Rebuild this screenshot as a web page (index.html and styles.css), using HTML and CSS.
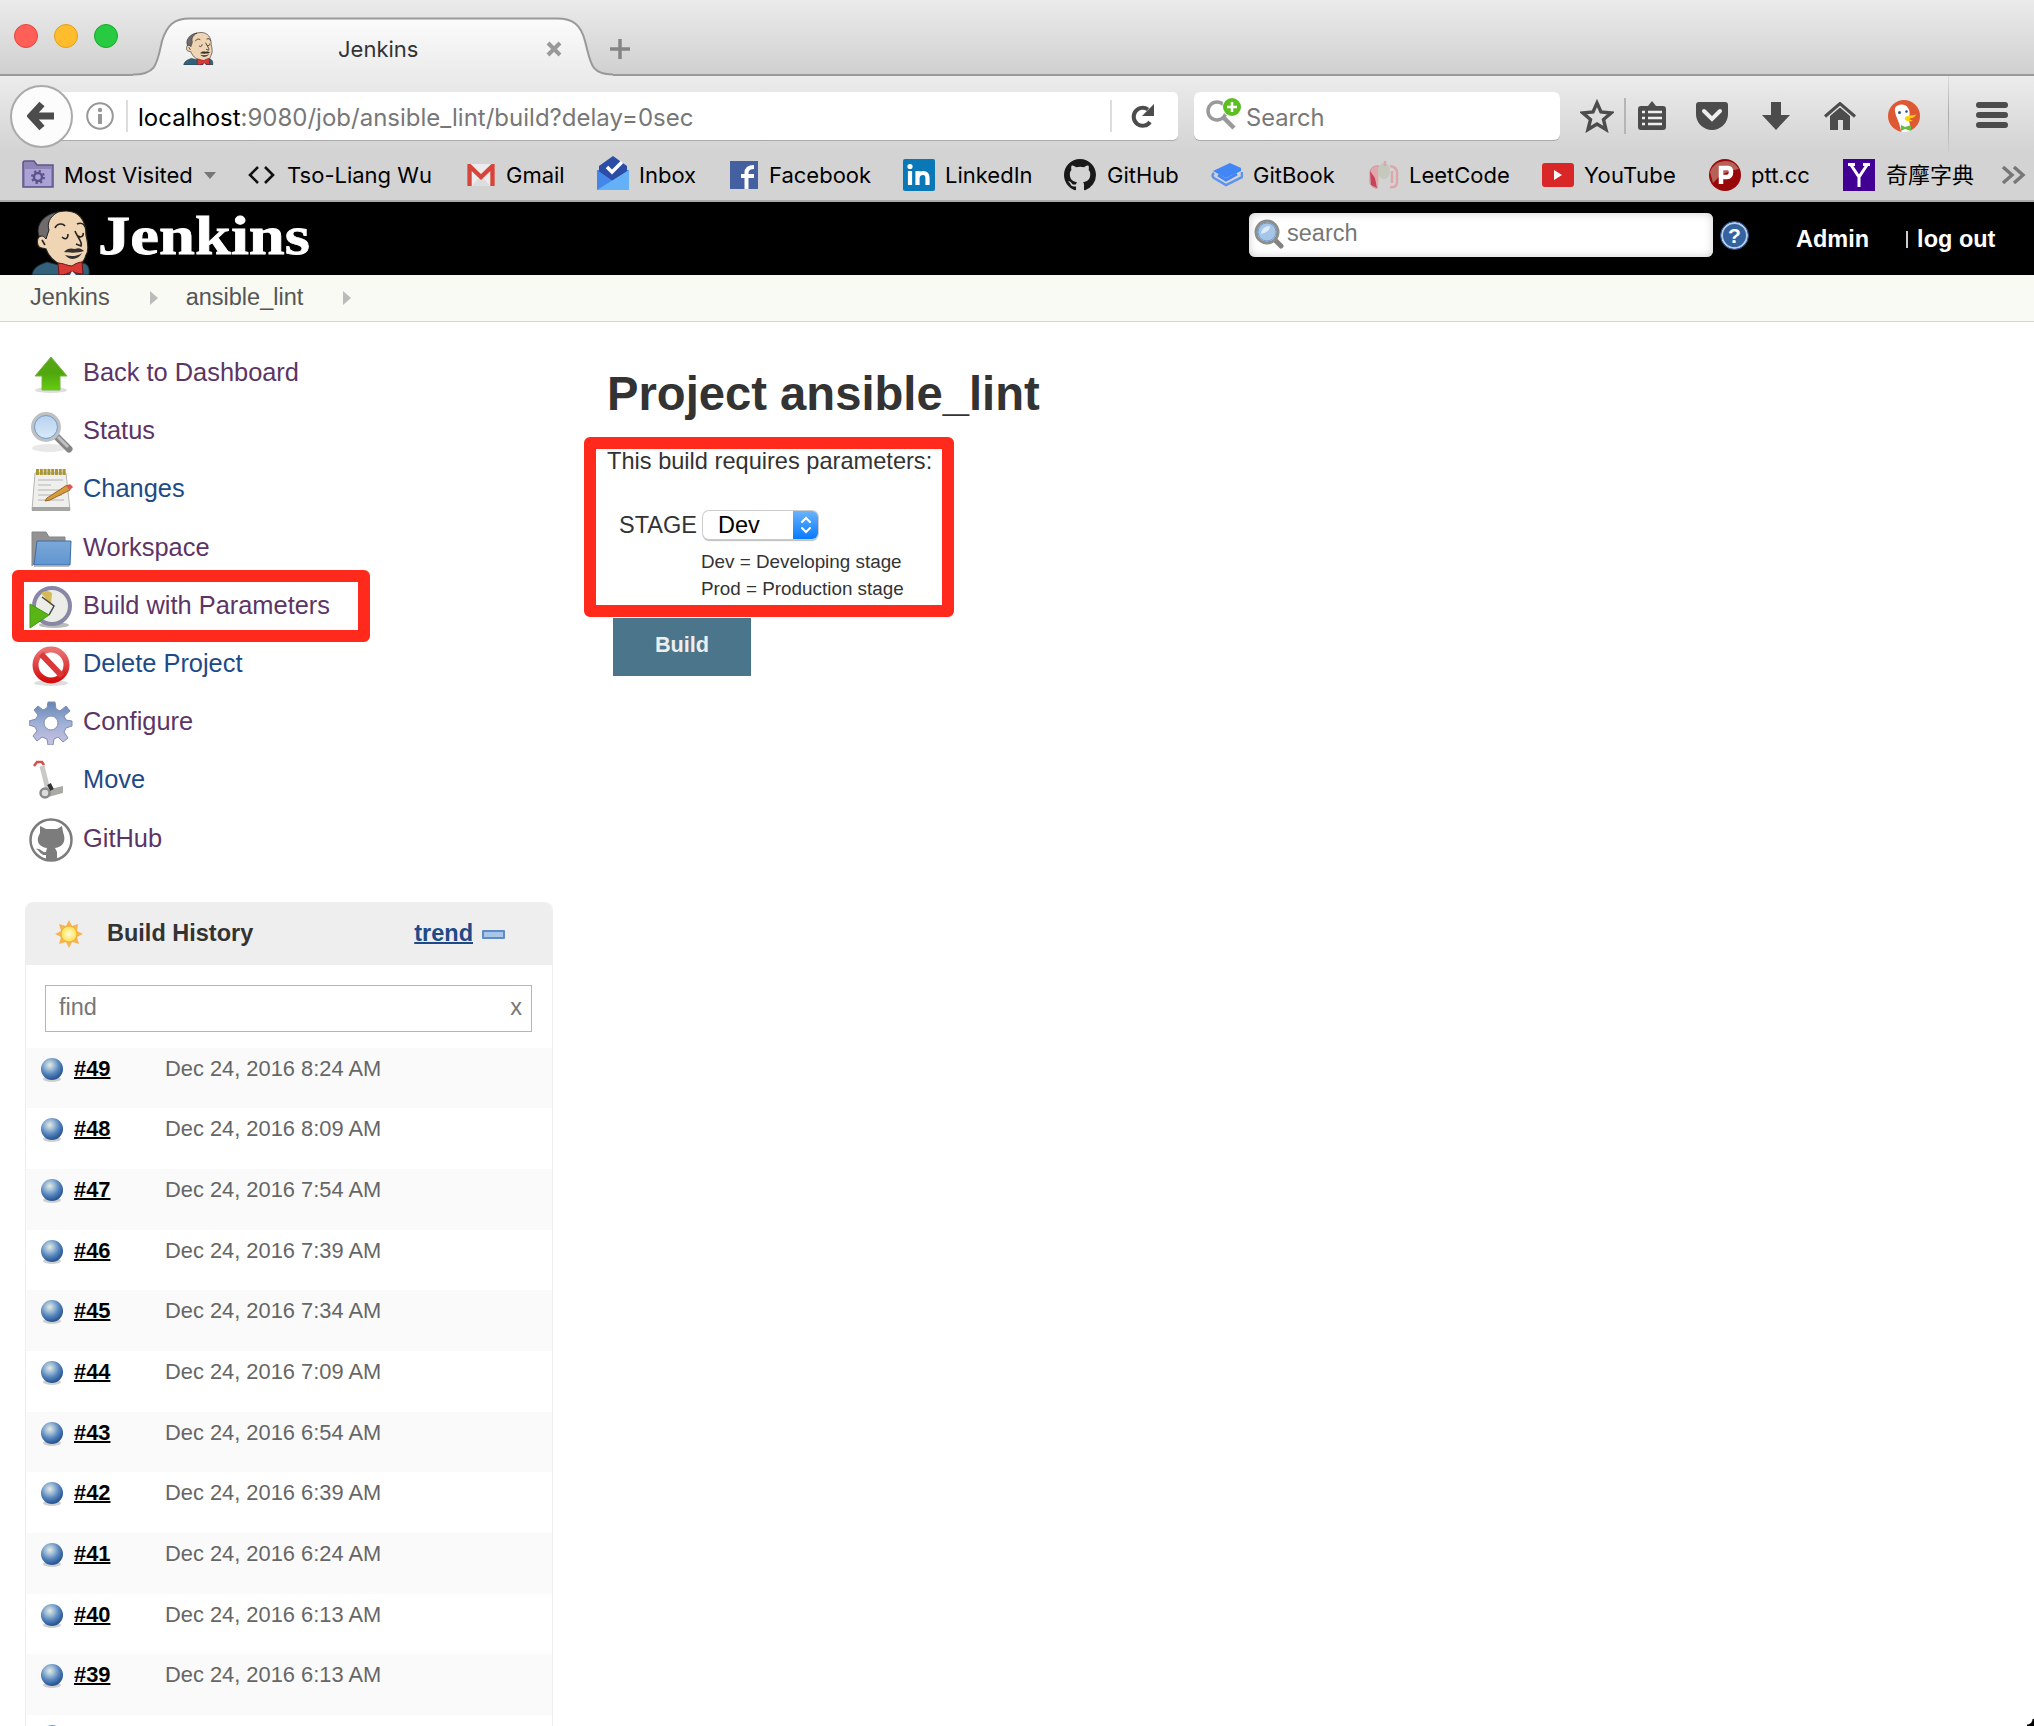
FILE: index.html
```html
<!DOCTYPE html>
<html lang="en">
<head>
<meta charset="utf-8">
<title>Jenkins</title>
<link rel="stylesheet" href="styles.css">
</head>
<body>
<svg class="defs" width="0" height="0">
  <defs>
    <radialGradient id="ballFill" cx="40%" cy="32%" r="65%"><stop offset="0" stop-color="#e6ecdf"/><stop offset=".3" stop-color="#a3c0d8"/><stop offset=".65" stop-color="#5685bd"/><stop offset="1" stop-color="#2a5795"/></radialGradient>
    <linearGradient id="arrowFill" x1="0" y1="0" x2="0" y2="1"><stop offset="0" stop-color="#5aa31c"/><stop offset=".5" stop-color="#4fa80c"/><stop offset="1" stop-color="#66cc11"/></linearGradient>
    <linearGradient id="lensFill" x1="0" y1="0" x2="0" y2="1"><stop offset="0" stop-color="#b4d0ee"/><stop offset="1" stop-color="#dcebfa"/></linearGradient>
    <linearGradient id="folderFill" x1="0" y1="0" x2="0" y2="1"><stop offset="0" stop-color="#7ba9d8"/><stop offset="1" stop-color="#5f95cf"/></linearGradient>
    <linearGradient id="gearFill" x1="0" y1="0" x2="0" y2="1"><stop offset="0" stop-color="#6585b4"/><stop offset=".5" stop-color="#9fb0d6"/><stop offset="1" stop-color="#c8c2e2"/></linearGradient>
    <linearGradient id="banFill" x1="0" y1="0" x2="0" y2="1"><stop offset="0" stop-color="#ea7373"/><stop offset="1" stop-color="#d40f0f"/></linearGradient>
    <linearGradient id="tabFill" x1="0" y1="0" x2="0" y2="1"><stop offset="0" stop-color="#fbfbfb"/><stop offset="1" stop-color="#ebebeb"/></linearGradient>
    <radialGradient id="sunFill"><stop offset="0" stop-color="#fffce0"/><stop offset="1" stop-color="#ffe24a"/></radialGradient>
    <symbol id="butler" viewBox="0 0 58 65">
      <path d="M0 65C1 58 6 55 15 52L27 55 44 54 52 53C56 55 58 58 57 65Z" fill="#33607a" stroke="#1c2c36"/>
      <path d="M10 38C4 38 4 27 9 26C7 12 18 1 34 1C47 1 54 10 54 25C56 33 57 41 54 45C52 53 46 58 38 57C28 56 18 50 14 39Z" fill="#efd5b4" stroke="#2a2521" stroke-width="1.2"/>
      <path d="M7 26C3 15 12 4 26 2C17 7 15 14 17 20L14 29C12 26 9 25 7 27Z" fill="#6f6b6d" stroke="#222"/>
      <path d="M23 18C25 13 31 13 33 16M45 14C49 12 52 14 53 17M30 27C33 30 36 29 36 24M46 26C49 28 52 26 51 23M43 21C45 27 51 32 49 36L44 34M10 30L13 35" fill="none" stroke="#2a2521" stroke-width="1.6"/>
      <path d="M32 42C35 38 39 38 43 39C47 37 50 39 52 41C47 43 38 43 32 42ZM33 45C40 47 46 46 50 43C46 50 38 51 33 45Z" fill="#33302f"/>
      <path d="M26 53C31 53 36 56 40 56C44 53 48 52 50 52L51 64C47 64 43 63 40 61C36 64 32 65 27 65Z" fill="#d83a35" stroke="#6d1414"/>
      <path d="M38 65L40 61L44 65Z" fill="#eee"/>
    </symbol>
    <symbol id="octocat" viewBox="0 0 16 16"><path d="M8 0C3.58 0 0 3.58 0 8c0 3.54 2.29 6.53 5.47 7.59.4.07.55-.17.55-.38 0-.19-.01-.82-.01-1.49-2.01.37-2.53-.49-2.69-.94-.09-.23-.48-.94-.82-1.13-.28-.15-.68-.52-.01-.53.63-.01 1.08.58 1.23.82.72 1.21 1.87.87 2.33.66.07-.52.28-.87.51-1.07-1.78-.2-3.64-.89-3.64-3.95 0-.87.31-1.59.82-2.15-.08-.2-.36-1.02.08-2.12 0 0 .67-.21 2.2.82.64-.18 1.32-.27 2-.27s1.36.09 2 .27c1.53-1.04 2.2-.82 2.2-.82.44 1.1.16 1.92.08 2.12.51.56.82 1.27.82 2.15 0 3.07-1.87 3.75-3.65 3.95.29.25.54.73.54 1.48 0 1.07-.01 1.93-.01 2.2 0 .21.15.46.55.38A8.01 8.01 0 0 0 16 8c0-4.42-3.58-8-8-8z"/></symbol>
    <symbol id="ball" viewBox="0 0 24 26"><ellipse cx="12" cy="22" rx="9" ry="3" fill="#bbb" opacity=".7"/><circle cx="12" cy="12" r="11" fill="url(#ballFill)"/></symbol>
  </defs>
</svg>

<header class="browser">
  <div class="tabstrip">
    <div class="lights"><i class="red"></i><i class="yellow"></i><i class="green"></i></div>
    <div class="tab">
      <svg class="tab-shape" width="480" height="60" viewBox="0 0 480 60"><path d="M0 58C24 58 24 46 29 24C34 8 41 2 57 2H424C440 2 448 8 452 24C458 46 457 58 480 58V60H0Z" fill="url(#tabFill)"/><path d="M0 57.500C24 57.500 24 46 29 24C34 8 41 1.500 57 1.500H424C440 1.500 448 8 452 24C458 46 457 57.500 480 57.500" fill="none" stroke="#999" stroke-width="2"/></svg>
      <div class="tab-body">
        <svg width="31" height="33"><use href="#butler"/></svg>
        <span class="tab-title">Jenkins</span>
        <svg width="16" height="16" viewBox="0 0 16 16"><path d="M2 2L14 14M14 2L2 14" stroke="#999" stroke-width="4"/></svg>
      </div>
    </div>
    <svg class="newtab" width="22" height="22" viewBox="0 0 22 22"><path d="M11 1V21M1 11H21" stroke="#858585" stroke-width="3.500"/></svg>
  </div>

  <div class="navbar">
    <div class="urlbar">
      <div class="back"><svg width="28" height="30" viewBox="0 0 28 30"><path d="M15 3L4 15L15 27M5 15H27" fill="none" stroke="#4c4c4c" stroke-width="7"/></svg></div>
      <svg class="info" width="28" height="28" viewBox="0 0 28 28"><circle cx="14" cy="14" r="12.800" fill="none" stroke="#979797" stroke-width="2"/><circle cx="14" cy="8" r="2.200" fill="#979797"/><path d="M14 12V22" stroke="#979797" stroke-width="4"/></svg>
      <span class="url"><b>localhost</b>:9080/job/ansible_lint/build?delay=0sec</span>
      <span class="reload"><svg width="26" height="26" viewBox="0 0 26 26"><path d="M20 19A9 9 0 1 1 18 6.500" fill="none" stroke="#4c4c4c" stroke-width="4"/><path d="M24 1V13H12Z" fill="#4c4c4c"/></svg></span>
    </div>
    <div class="websearch">
      <svg width="36" height="34" viewBox="0 0 36 34"><circle cx="11" cy="13" r="9" fill="none" stroke="#999" stroke-width="3.500"/><path d="M17 19L28 30" stroke="#999" stroke-width="4.500"/><circle cx="26" cy="9" r="10" fill="#fff"/><circle cx="26" cy="9" r="9" fill="#5cbf21"/><path d="M26 4V14M21 9H31" stroke="#fff" stroke-width="2.500"/></svg>
      <span>Search</span>
    </div>
    <svg class="i-star" width="34" height="34" viewBox="0 0 34 34"><path d="M17 4L21 13L31 14L23.500 20.500L26 30.500L17 25L8 30.500L10.500 20.500L3 14L13 13Z" fill="none" stroke="#4c4c4c" stroke-width="3.400"/></svg>
    <i class="tooldiv"></i>
    <svg class="i-list" width="28" height="30" viewBox="0 0 28 30"><path d="M10 5L14 0L18 5H25Q28 5 28 8V26Q28 29 25 29H3Q0 29 0 26V8Q0 5 3 5Z" fill="#4c4c4c"/><path d="M4 11H7M10 11H24M4 17H7M10 17H24M4 23H7M10 23H24" stroke="#eee" stroke-width="2.400"/></svg>
    <svg class="i-pocket" width="32" height="28" viewBox="0 0 32 28"><path d="M3 0H29Q32 0 32 3V12A16 16 0 0 1 0 12V3Q0 0 3 0Z" fill="#4c4c4c"/><path d="M8 9L16 17L24 9" fill="none" stroke="#eee" stroke-width="4" stroke-linecap="round"/></svg>
    <svg class="i-down" width="28" height="28" viewBox="0 0 28 28"><path d="M9 0H19V13H28L14 28L0 13H9Z" fill="#4c4c4c"/></svg>
    <svg class="i-home" width="32" height="28" viewBox="0 0 32 28"><path d="M1 14.500L16 1.500L31 14.500" fill="none" stroke="#4c4c4c" stroke-width="3"/><path d="M6 14L16 5.500L26 14V28H19V18H14V28H6Z" fill="#4c4c4c"/></svg>
    <svg class="i-duck" width="32" height="32" viewBox="0 0 32 32"><circle cx="16" cy="16" r="16" fill="#de5833"/><path d="M7 8C9 4 17 3 20 8C23 12 21 17 21 20L23 31Q17 33 13 31.500C12 22 6 15 7 8Z" fill="#fff"/><circle cx="11.500" cy="12.500" r="1.500" fill="#2d4f8e"/><circle cx="18.500" cy="11.500" r="1.300" fill="#2d4f8e"/><path d="M17 17C21 15 24 16 28 14.500C27 18 23 18 21 19L25 21C20 22 16 21 17 17Z" fill="#fdd20a"/><path d="M13 25L17 27L23 25V31L17 29L13 31Z" fill="#65bc46"/></svg>
    <i class="menudiv"></i>
    <span class="menu"><i></i><i></i><i></i></span>
  </div>

  <nav class="bookmarks">
    <a class="bm m1"><svg width="32" height="29" viewBox="0 0 32 29"><path d="M1 27V3Q1 1 3 1H12L15 5H31V27Z" fill="#8f84b8" stroke="#5e5587" stroke-width="1.500"/><path d="M3 9H29V26H3Z" fill="#aba2d6"/><circle cx="16" cy="17" r="4" fill="none" stroke="#5b5288" stroke-width="2.400"/><circle cx="16" cy="17" r="6" fill="none" stroke="#5b5288" stroke-width="2" stroke-dasharray="2.300 2.400"/></svg><span>Most Visited</span><i class="caret"></i></a>
    <a class="bm m2"><svg width="27" height="18" viewBox="0 0 27 18"><path d="M10 1L2 9L10 17M17 1L25 9L17 17" fill="none" stroke="#111" stroke-width="2.600"/></svg><span>Tso-Liang Wu</span></a>
    <a class="bm m3"><svg width="28" height="22" viewBox="0 0 28 22"><path d="M0 0H28V22H0Z" fill="#ececec"/><path d="M5 22L14 11L23 22Z" fill="#ddd"/><path d="M2.500 22V2L14 13L25.500 2V22" fill="none" stroke="#d6453b" stroke-width="4.400"/></svg><span>Gmail</span></a>
    <a class="bm m4"><svg width="32" height="34" viewBox="0 0 32 34"><path d="M0 14H32V34H0Z" fill="#4487e8"/><path d="M2 10L16 0L30 10V18L16 27L2 18Z" fill="#2c4da5"/><path d="M10 11L15 16L25 6" fill="none" stroke="#fff" stroke-width="3.500"/><path d="M0 14L16 25L32 14V34H0Z" fill="#4487e8"/><path d="M0 34L32 14V34Z" fill="#64b1f7"/></svg><span>Inbox</span></a>
    <a class="bm m5"><svg width="28" height="28" viewBox="0 0 28 28"><path d="M0 0H28V28H0Z" fill="#4560a0"/><path d="M16.500 28V12Q16.500 6 24 6M11 15H24" fill="none" stroke="#fff" stroke-width="4"/></svg><span>Facebook</span></a>
    <a class="bm m6"><svg width="32" height="32" viewBox="0 0 32 32"><rect width="32" height="32" rx="2" fill="#0a78b6"/><path d="M7 12V26M14.500 26V12M14.500 19Q15 14 20 14Q24.500 14 24.500 19V26" fill="none" stroke="#fff" stroke-width="4.200"/><circle cx="7" cy="7.500" r="2.600" fill="#fff"/></svg><span>LinkedIn</span></a>
    <a class="bm m7"><svg width="32" height="32" fill="#181818"><use href="#octocat"/></svg><span>GitHub</span></a>
    <a class="bm m8"><svg width="32" height="24" viewBox="0 0 32 24"><path d="M2 8L19 0L30 5V8L15 15Z" fill="#4285f4"/><path d="M3 10Q0 13 3 15L15 22L31 14V9" fill="none" stroke="#5c93ef" stroke-width="2.500"/><path d="M7 12L15 17L26 11" fill="none" stroke="#4285f4" stroke-width="3"/></svg><span>GitBook</span></a>
    <a class="bm m9"><svg width="30" height="28" viewBox="0 0 30 28"><path d="M10 5Q3 4 1 10V22Q3 28 9 27" fill="#dfa9ac" stroke="#c99"/><path d="M1 10L6 17L8 27L2 24Z" fill="#c8435a"/><ellipse cx="15" cy="10" rx="6" ry="8" fill="#c5c8bd"/><path d="M16 0V5M21 5Q29 6 28 14V22Q27 27 21 26M23 10V22" fill="none" stroke="#dca7aa" stroke-width="2.500"/></svg><span>LeetCode</span></a>
    <a class="bm m10"><svg width="32" height="24" viewBox="0 0 32 24"><rect width="32" height="24" rx="3" fill="#d92626"/><path d="M12 7L20 12L12 17Z" fill="#fff"/></svg><span>YouTube</span></a>
    <a class="bm m11"><svg width="32" height="32" viewBox="0 0 32 32"><circle cx="16" cy="16" r="16" fill="#990808"/><path d="M1 13A16 16 0 0 1 30 10Q14 12 4 24Z" fill="#b76058"/><path d="M12 25V9H19Q22 9 22 13Q22 18 18 18H12" fill="none" stroke="#fff" stroke-width="4.500"/></svg><span>ptt.cc</span></a>
    <a class="bm m12"><svg width="32" height="32" viewBox="0 0 32 32"><path d="M0 0H32V32H0Z" fill="#410093"/><path d="M8 6L16 18L24 6M16 17V28M5 5.500H12M20 5.500H27" fill="none" stroke="#fff" stroke-width="3"/></svg><span>奇摩字典</span></a>
    <svg class="more" width="25" height="18" viewBox="0 0 25 18"><path d="M2 1L11 9L2 17M13 1L22 9L13 17" fill="none" stroke="#777" stroke-width="3.400"/></svg>
  </nav>
</header>

<div class="jenkins-header">
  <svg class="logo" width="60" height="65"><use href="#butler"/></svg>
  <span class="wordmark">Jenkins</span>
  <div class="jsearch"><svg width="30" height="30" viewBox="0 0 30 30"><path d="M21 21L27 27" stroke="#85827e" stroke-width="5" stroke-linecap="round"/><circle cx="13" cy="13" r="11" fill="url(#lensFill)" stroke="#8d8d8b" stroke-width="3"/><circle cx="13" cy="13" r="9" fill="#a6c6e8" stroke="#6f9bd0"/><path d="M7 15Q8 7 16 7Q16 13 7 15Z" fill="#deebfa"/></svg><span>search</span></div>
  <span class="help">?</span>
  <span class="user">Admin</span>
  <span class="logout"><i></i>log out</span>
</div>
<div class="crumbs"><span>Jenkins</span><i></i><span>ansible_lint</span><i></i></div>

<div class="page">
  <aside class="side">
    <ul class="tasks">
      <li><svg viewBox="0 0 44 44"><ellipse cx="22" cy="38" rx="16" ry="3" fill="#ddd"/><path d="M22 5L38 24H31V38H13V24H6Z" fill="url(#arrowFill)" stroke="#77b43f"/></svg><a>Back to Dashboard</a></li>
      <li><svg viewBox="0 0 44 44"><ellipse cx="20" cy="38" rx="17" ry="4" fill="#e8e8e8"/><path d="M28 27L40 39" stroke="#858585" stroke-width="7" stroke-linecap="round"/><path d="M29 27L39 37" stroke="#c0c0c0" stroke-width="3"/><circle cx="17" cy="17" r="13" fill="url(#lensFill)" stroke="#bfc1c3" stroke-width="4"/><circle cx="17" cy="17" r="11.500" fill="none" stroke="#719fd4"/></svg><a>Status</a></li>
      <li><svg viewBox="0 0 44 44"><path d="M6 5H37L41 42H3Z" fill="#efefed" stroke="#b5b5b3"/><path d="M3 39H41V43H3Z" fill="#a5a5a3"/><path d="M9 12H34M9 17H22M9 22H30M9 27H33M9 32H35" stroke="#c8c8c6" stroke-width="1.500"/><path d="M7 4H37" stroke="#aa9632" stroke-width="6" stroke-dasharray="3 .8"/><path d="M18 30L38 17L41 22L21 32L16 33Z" fill="#d69b3c" stroke="#98661f"/><path d="M37 18L41 16L44 19L41 22Z" fill="#df5555"/></svg><a class="new">Changes</a></li>
      <li><svg viewBox="0 0 44 44"><path d="M3 39V5H17L20 10H36V20" fill="#929292" stroke="#858585"/><path d="M8 14H42L41 38H5Z" fill="url(#folderFill)" stroke="#3c6ca6"/><path d="M5 39H40" stroke="#aaa" stroke-width="1.500"/></svg><a>Workspace</a></li>
      <li><svg viewBox="0 0 44 44"><ellipse cx="25" cy="40" rx="15" ry="3" fill="#bbb"/><circle cx="23" cy="21" r="18" fill="#ecece8" stroke="#8887a6" stroke-width="4"/><path d="M12 8Q18 4 23 8L22 20Z" fill="#d4ba58"/><path d="M13 12L25 21L20 30" fill="none" stroke="#444" stroke-width="1.500"/><path d="M1 19L20 30L1 43Z" fill="#59b516" stroke="#429714"/></svg><a>Build with Parameters</a></li>
      <li><svg viewBox="0 0 44 44"><ellipse cx="22" cy="40" rx="17" ry="3" fill="#ddd"/><circle cx="22" cy="22" r="15.500" fill="#fff" stroke="url(#banFill)" stroke-width="6"/><path d="M12 11L33 33" stroke="#db3939" stroke-width="6"/></svg><a class="new">Delete Project</a></li>
      <li><svg viewBox="0 0 44 44"><path fill-rule="evenodd" d="M19 1H26L27 8L31 10L37 5L41 10L35 15L37 19L43 20V25L37 27L35 31L39 37L34 41L29 36L25 38L24 44H19L18 38L13 36L8 40L4 35L8 30L6 26L0 24V20L7 18L9 14L5 9L9 5L14 9L18 7ZM22 15A7 7 0 1 0 22 29A7 7 0 1 0 22 15Z" fill="url(#gearFill)" stroke="#808cb2"/></svg><a>Configure</a></li>
      <li><svg viewBox="0 0 44 44"><path d="M5 7L8 3H13L15 6" fill="none" stroke="#d94c4c" stroke-width="2.500"/><path d="M13 7L19 31" stroke="#c9cac6" stroke-width="5"/><path d="M17 31L34 27V34L19 38Z" fill="#a8aaa4"/><path d="M20 25L23 31" stroke="#333" stroke-width="4"/><circle cx="16" cy="34" r="4.500" fill="#ddd" stroke="#888" stroke-width="2.500"/></svg><a class="new">Move</a></li>
      <li><svg viewBox="0 0 44 44"><circle cx="22" cy="22" r="20.500" fill="#fff" stroke="#7c7c7c" stroke-width="2.500"/><path d="M11 8L17 11H28L33 8L34 14C38 24 33 29 26 30L28 34V42H17V37C12 38 10 32 7 31C12 30 13 35 17 34L18 30C10 29 6 23 11 15Z" fill="#7c7c7c"/></svg><a>GitHub</a></li>
    </ul>
    <section class="history">
      <div class="hist-head">
        <svg width="28" height="28" viewBox="0 0 28 28"><path d="M14 0L17 6L23 4L22 11L28 14L22 17L24 24L17 22L14 28L11 22L4 24L6 17L0 14L6 11L4 4L11 6Z" fill="#f6b553"/><circle cx="14" cy="14" r="8" fill="url(#sunFill)" stroke="#f2ab3b"/></svg>
        <b>Build History</b><a>trend</a><i class="minus"></i>
      </div>
      <div class="find"><span>find</span><span class="clear">x</span></div>
      <ol class="builds">
        <li><svg><use href="#ball"/></svg><a>#49</a><time>Dec 24, 2016 8:24 AM</time></li>
        <li><svg><use href="#ball"/></svg><a>#48</a><time>Dec 24, 2016 8:09 AM</time></li>
        <li><svg><use href="#ball"/></svg><a>#47</a><time>Dec 24, 2016 7:54 AM</time></li>
        <li><svg><use href="#ball"/></svg><a>#46</a><time>Dec 24, 2016 7:39 AM</time></li>
        <li><svg><use href="#ball"/></svg><a>#45</a><time>Dec 24, 2016 7:34 AM</time></li>
        <li><svg><use href="#ball"/></svg><a>#44</a><time>Dec 24, 2016 7:09 AM</time></li>
        <li><svg><use href="#ball"/></svg><a>#43</a><time>Dec 24, 2016 6:54 AM</time></li>
        <li><svg><use href="#ball"/></svg><a>#42</a><time>Dec 24, 2016 6:39 AM</time></li>
        <li><svg><use href="#ball"/></svg><a>#41</a><time>Dec 24, 2016 6:24 AM</time></li>
        <li><svg><use href="#ball"/></svg><a>#40</a><time>Dec 24, 2016 6:13 AM</time></li>
        <li><svg><use href="#ball"/></svg><a>#39</a><time>Dec 24, 2016 6:13 AM</time></li>
        <li><svg><use href="#ball"/></svg></li>
      </ol>
    </section>
  </aside>
  <main>
    <h1>Project ansible_lint</h1>
    <p class="intro">This build requires parameters:</p>
    <div class="param">
      <span class="pname">STAGE</span>
      <div>
        <div class="select"><span>Dev</span><i><svg width="12" height="18" viewBox="0 0 12 18"><path d="M2 6L6 2L10 6M2 12L6 16L10 12" fill="none" stroke="#fff" stroke-width="2" stroke-linecap="round"/></svg></i></div>
        <p class="desc">Dev = Developing stage<br>Prod = Production stage</p>
      </div>
    </div>
    <button class="build">Build</button>
  </main>
</div>
<div class="mark mark-task"></div>
<div class="mark mark-param"></div>
<i class="corner"></i>
</body>
</html>
```

FILE: styles.css
```css
* { box-sizing: border-box; }
html, body { margin: 0; height: 1726px; overflow: hidden; }
body { position: relative; background: #fff; color: #333; font-family: "Liberation Sans", Arial, sans-serif; font-size: 23.5px; }
svg { display: block; flex: none; }
.defs { position: absolute; }
ul, ol { list-style: none; margin: 0; padding: 0; }

/* browser chrome */
.browser { height: 202px; background: #d3d3d3; border-bottom: 2px solid #aaa; font-family: Inter, "Noto Sans CJK TC", sans-serif; color: #000; }
.tabstrip { height: 76px; display: flex; background: linear-gradient(#ebebeb, #d0d0d0); border-bottom: 2px solid #999; }
.lights { display: flex; gap: 16px; padding: 24px 0 0 14px; width: 133px; flex: none; }
.lights i { width: 24px; height: 24px; border-radius: 50%; border: 1px solid; }
.red { background: #ff5f57; border-color: #e2463f !important; }
.yellow { background: #ffbd2e; border-color: #e1a116 !important; }
.green { background: #28ca41; border-color: #12ac28 !important; }
.tab { width: 480px; height: 60px; margin-top: 17px; display: grid; flex: none; }
.tab > * { grid-area: 1 / 1; }
.tab-body { display: flex; align-items: center; padding: 3px 51px 0 50px; height: 60px; }
.tab-title { flex: 1; padding-left: 124px; font-size: 22px; color: #333; }
.newtab { margin: 38px 0 0 -4px; }
.navbar { height: 76px; display: flex; align-items: flex-start; background: linear-gradient(#ececec, #d3d3d3); }
.urlbar { width: 1136px; height: 48px; margin: 16px 0 0 42px; background: #fff; border-radius: 5px; box-shadow: 0 1px 0 #aaa; display: flex; align-items: center; flex: none; }
.back { width: 63px; height: 63px; margin: 0 13px 0 -32px; padding-right: 2px; border: 2px solid #aaa; border-radius: 50%; background: #fcfcfc; display: flex; align-items: center; justify-content: center; flex: none; }
.url { flex: 1; margin-left: 12px; padding: 3px 0 0 10px; border-left: 2px solid #ddd; line-height: 29px; font-size: 24px; color: #777; white-space: nowrap; }
.url b { font-weight: 400; color: #000; }
.reload { width: 68px; height: 32px; border-left: 2px solid #ddd; padding: 3px 0 0 18px; }
.websearch { width: 366px; height: 48px; margin: 16px 1px 0 16px; padding-left: 12px; background: #fff; border-radius: 6px; box-shadow: 0 1px 0 #aaa; display: flex; align-items: center; gap: 4px; color: #777; font-size: 23.7px; flex: none; }
.websearch svg { margin-top: -2px; }
.websearch span { margin-top: 2px; }
.i-star { margin: 23px 0 0 19px; }
.tooldiv { width: 2px; height: 36px; margin: 22px 0 0 10px; background: #b5b5b5; }
.i-list { margin: 25px 0 0 12px; }
.i-pocket { margin: 26px 0 0 30px; }
.i-down { margin: 26px 0 0 34px; }
.i-home { margin: 26px 0 0 34px; }
.i-duck { margin: 24px 0 0 32px; }
.menudiv { width: 1px; height: 76px; margin-left: 28px; background: linear-gradient(#ddd, #aaa, #ccc); }
.menu { display: grid; gap: 4px; margin: 26px 0 0 27px; }
.menu i { width: 32px; height: 6px; border-radius: 3px; background: #4c4c4c; }
.bookmarks { height: 46px; display: grid; align-items: center; grid-template-columns: 22px 226px 219px 130px 133px 173px 161px 147px 158px 173px 167px 134px 158px 33px; font-size: 22px; }
.bm { display: flex; align-items: center; gap: 10px; white-space: nowrap; }
.m1 { grid-column: 2; }
.m1 svg { margin-top: -2px; }
.m2 { gap: 12px; }
.m3, .m5, .m7, .m12 { gap: 11px; }
.m4 svg { margin-top: -5px; }
.m10 span { letter-spacing: .25px; }
.m12 span { margin-top: -4px; }
.caret { margin-left: 1px; border: 6px solid transparent; border-top: 7px solid #777; border-bottom: 0; }

/* application header */
.jenkins-header { height: 73px; background: #000; color: #fff; display: flex; align-items: flex-start; font-weight: 700; }
.logo { margin: 8px 0 0 31px; }
.wordmark { margin: 5px 0 0 7px; width: 1151px; font: 700 55px/57px "Liberation Serif", serif; -webkit-text-stroke: .8px #fff; transform: scaleX(1.175); transform-origin: 0 0; }
.jsearch { position: relative; width: 464px; height: 44px; margin-top: 11px; padding-left: 5px; border-radius: 6px; background: #fff; box-shadow: inset 0 0 8px #ccc; display: flex; align-items: center; gap: 3px; color: #777; font-weight: 400; flex: none; }
.jsearch svg { margin-top: -2px; }
.jsearch span { margin-top: -4px; }
.help { width: 27px; height: 27px; margin: 20px 0 0 8px; border-radius: 50%; border: 2px solid #b9cde6; outline: 1px solid #3465a4; background: #34639f; text-align: center; font-size: 21px; line-height: 23px; }
.user { margin: 24px 0 0 48px; }
.logout { margin: 24px 0 0 37px; display: flex; align-items: center; gap: 9px; white-space: nowrap; }
.logout i { width: 2px; height: 17px; background: #ccc; }
.crumbs { height: 47px; padding: 0 0 1px 30px; background: #f8faf3; border-bottom: 1px solid #d3d7cf; display: flex; align-items: center; color: #555; }
.crumbs i { border: 7px solid transparent; border-left: 8px solid #bbb; border-right: 0; margin: 0 28px 0 40px; }

/* sidebar */
.page { display: flex; }
.side { width: 553px; padding: 22px 0 0 25px; flex: none; }
.tasks li { height: 58.2px; display: flex; align-items: center; padding-left: 4px; gap: 10px; font-size: 25.4px; color: #5c3566; }
.tasks svg { width: 44px; height: 44px; margin-top: 2px; }
.tasks a { margin-top: -1px; }
.new { color: #204a87; }
.history { margin-top: 34px; border: 1px solid #eee; border-width: 0 1px; border-radius: 8px 8px 0 0; }
.hist-head { height: 63px; padding: 1px 47px 0 29px; background: #eee; border-radius: 8px 8px 0 0; display: flex; align-items: center; color: #333; }
.hist-head b { margin-left: 24px; flex: 1; }
.hist-head a { color: #204a87; font-weight: 700; text-decoration: underline; text-decoration-thickness: 2px; }
.minus { width: 23px; height: 9px; margin: 1px 0 0 9px; border: 2px solid #5e8cc6; background: #a9c5e8; border-radius: 1px; }
.find { height: 47px; margin: 20px 20px 16px 19px; padding: 0 9px 2px 13px; border: 1px solid #b5b5b5; display: flex; align-items: center; justify-content: space-between; color: #777; }
.builds { font-size: 21.85px; }
.builds li { height: 60.67px; padding: 8px 0 0 14px; display: flex; }
.builds li:nth-child(odd) { background: #fafafa; }
.builds svg { width: 24px; height: 26px; margin-top: 1px; }
.builds a { margin-left: 10px; width: 91px; color: #000; font-weight: 700; text-decoration: underline; text-decoration-thickness: 2px; }
.builds time { color: #666; }

/* build form */
main { padding: 40px 0 0 54px; }
h1 { margin: 0; font-size: 47.2px; line-height: 64px; }
.intro { margin: 21px 0 0; line-height: 28px; font-size: 23.6px; }
.param { display: flex; margin: 36px 0 0 12px; gap: 4px; line-height: 28px; }
.pname { width: 78px; }
.select { width: 115px; height: 28px; margin-left: 2px; padding-left: 15px; border-radius: 6px; background: #fff; box-shadow: 0 0 0 1px #ccc, 0 2px 1px #bbb; color: #000; display: flex; justify-content: space-between; }
.select i { width: 25px; border-radius: 0 6px 6px 0; background: linear-gradient(#6cb3fa, #067aff); display: flex; align-items: center; justify-content: center; }
.desc { margin: 9px 0 0; font-size: 18.85px; line-height: 27px; }
.build { display: block; width: 138px; height: 58px; margin: 16px 0 0 6px; padding: 0 0 4px; border: 1px solid #45788f; background: #4b758b; color: #eee; font: 700 21.7px "Liberation Sans", sans-serif; }

/* highlight frames drawn over the page */
.mark { position: absolute; border: 12px solid #ff2a1c; border-radius: 6px; }
.mark-task { left: 12px; top: 569.5px; width: 358px; height: 72px; }
.mark-param { left: 584px; top: 437px; width: 370px; height: 180px; }
.corner { position: absolute; right: 0; bottom: 0; width: 7px; height: 7px; background: radial-gradient(circle at 0 0, #fff 5px, #000 6px); }
```
